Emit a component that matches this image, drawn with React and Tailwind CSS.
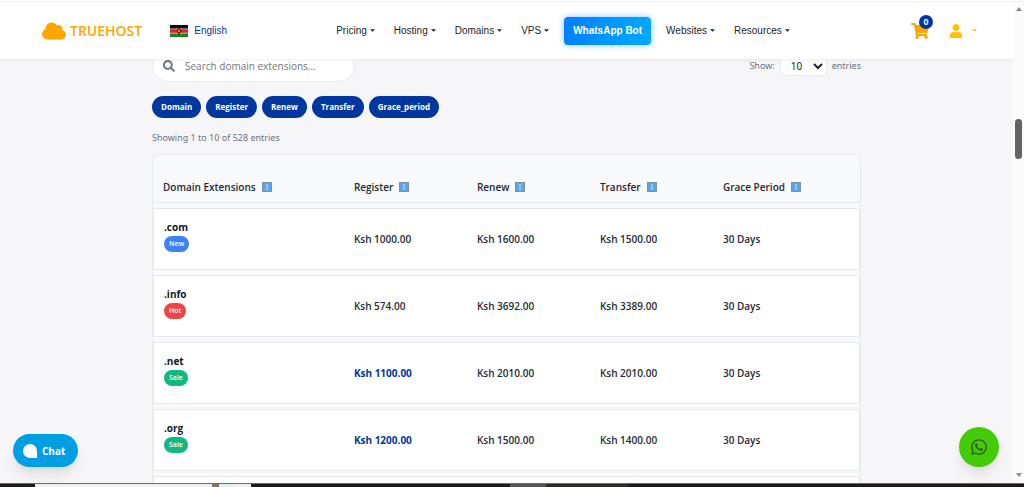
import React, { useState } from "react";
import { FaCloud, FaSearch, FaShoppingCart, FaUser, FaWhatsapp } from "react-icons/fa";

const menuBefore = ["Pricing", "Hosting", "Domains", "VPS"];
const menuAfter = ["Websites", "Resources"];

const filters = ["Domain", "Register", "Renew", "Transfer", "Grace_period"];

const columns = ["Domain Extensions", "Register", "Renew", "Transfer", "Grace Period"];

const domains = [
  { name: ".com", badge: "New", register: "1000.00", renew: "1600.00", transfer: "1500.00" },
  { name: ".info", badge: "Hot", register: "574.00", renew: "3692.00", transfer: "3389.00" },
  { name: ".net", badge: "Sale", register: "1100.00", renew: "2010.00", transfer: "2010.00" },
  { name: ".org", badge: "Sale", register: "1200.00", renew: "1500.00", transfer: "1400.00" }
];

const badgeColors = {
  New: "bg-[#3b82f6]",
  Hot: "bg-[#ef4444]",
  Sale: "bg-[#10b981]"
};

const Caret = () => (
  <svg viewBox="0 0 6 3" className="w-[5px] h-[3px]" fill="currentColor" aria-hidden="true">
    <path d="M0 0h6L3 3z" />
  </svg>
);

const KenyaFlag = () => (
  <svg viewBox="0 0 18 12" className="w-[18px] h-3" role="img" aria-label="Kenya">
    <rect width="18" height="12" fill="#fff" />
    <rect width="18" height="3.6" fill="#0a0a0a" />
    <rect y="4.2" width="18" height="3.6" fill="#e0202e" />
    <rect y="8.4" width="18" height="3.6" fill="#0b8a1a" />
    <path d="M6.6 2.6l4.8 7M11.4 2.6l-4.8 7" stroke="#fff" strokeWidth="0.4" />
    <ellipse cx="9" cy="6" rx="1.7" ry="3.4" fill="#a80d18" />
    <ellipse cx="9" cy="6" rx="0.5" ry="1.2" fill="#fff" />
    <path d="M7.4 4.8v2.4M10.6 4.8v2.4" stroke="#111" strokeWidth="0.6" />
  </svg>
);

const SortIcon = () => (
  <svg viewBox="0 0 10 10" className="w-[10px] h-[10px]" aria-hidden="true">
    <rect x="0.5" y="0.5" width="9" height="9" fill="#58a6e6" stroke="#7b93a8" />
    <path d="M5 2.5v5M4 3.5l1-1 1 1M4 6.5l1 1 1-1" fill="none" stroke="#d3e8fa" strokeWidth="0.8" />
  </svg>
);

const MenuLink = ({ label }) => (
  <a href="#" className="flex items-center gap-[3px]">
    {label}
    <Caret />
  </a>
);

const Header = () => (
  <header className="relative z-10 flex h-[57px] shrink-0 items-center justify-between bg-white pl-[42px] pr-9 shadow-[0_1px_4px_rgba(0,0,0,0.07)] font-['Liberation_Sans',Arial,sans-serif] text-[10px] text-[#212529]">
    <div className="flex items-center gap-7">
      <a href="#" className="flex items-center gap-1 text-[#ffa500]">
        <FaCloud className="h-6 w-6" />
        <span className="font-['Open_Sans',sans-serif] text-[14px] font-semibold">TRUEHOST</span>
      </a>
      <a href="#" className="flex items-center gap-[6px] text-[#00379e]">
        <KenyaFlag />
        English
      </a>
    </div>

    <nav className="flex items-center gap-[19px] pr-3">
      {menuBefore.map((label) => (
        <MenuLink key={label} label={label} />
      ))}
      <a
        href="#"
        className="-mx-1 rounded-sm bg-linear-to-r from-[#0080ff] to-[#00aaff] px-[9px] py-[6px] font-bold leading-4 text-white shadow-[0_0_6px_rgba(0,140,255,0.5)]"
      >
        WhatsApp Bot
      </a>
      {menuAfter.map((label) => (
        <MenuLink key={label} label={label} />
      ))}
    </nav>

    <div className="flex items-center gap-5">
      <button type="button" aria-label="Cart" className="relative text-[#ffa500]">
        <FaShoppingCart className="h-[18px] w-[18px]" />
        <span className="absolute -right-1 -top-[7px] flex h-[14px] w-[14px] items-center justify-center rounded-full bg-[#00379e] text-[9px] font-bold text-white">
          0
        </span>
      </button>
      <button type="button" aria-label="Account" className="flex items-center gap-[9px] text-[#ffc107]">
        <FaUser className="h-[14px] w-[14px]" />
        <Caret />
      </button>
    </div>
  </header>
);

const DomainTable = () => (
  <div className="mt-2 rounded-t-lg border border-[#e9ecef] bg-[#f8f9fb]">
    <table className="w-full table-fixed border-separate border-spacing-x-0 border-spacing-y-[5px] text-left">
      <colgroup>
        <col className="w-[27%]" />
        <col className="w-[17.4%]" />
        <col className="w-[17.4%]" />
        <col className="w-[17.4%]" />
        <col />
      </colgroup>
      <thead>
        <tr>
          {columns.map((column) => (
            <th
              key={column}
              className="h-[43px] border-b border-[#e9ecef] px-[10px] pb-[7px] align-bottom font-semibold text-[#1f2937]"
            >
              <span className="flex items-center gap-[6px]">
                {column}
                <SortIcon />
              </span>
            </th>
          ))}
        </tr>
      </thead>
      <tbody className="font-semibold text-[#1f2937] [&_td]:h-[62px] [&_td]:border-y [&_td]:border-[#e5e7eb] [&_td]:bg-white [&_td]:px-[10px]">
        {domains.map((domain) => (
          <tr key={domain.name}>
            <td className="rounded-l-xs border-l">
              <div className="flex flex-col items-start gap-px pb-2">
                <span className="text-[10px] font-bold leading-4 text-[#111827]">{domain.name}</span>
                <span
                  className={`${badgeColors[domain.badge]} rounded-full px-[5px] text-[7px] font-semibold leading-4 text-white`}
                >
                  {domain.badge}
                </span>
              </div>
            </td>
            <td className={domain.badge === "Sale" ? "font-bold text-[#00379e]" : ""}>
              Ksh {domain.register}
            </td>
            <td>Ksh {domain.renew}</td>
            <td>Ksh {domain.transfer}</td>
            <td className="rounded-r-xs border-r">30 Days</td>
          </tr>
        ))}
        <tr aria-hidden="true">
          <td colSpan={5} className="rounded-xs border-x" />
        </tr>
      </tbody>
    </table>
  </div>
);

const ScrollBar = () => (
  <div className="flex w-[11px] shrink-0 flex-col items-center bg-[#fbfbfb] pb-[6px] pt-[5px] text-[#8a8a8a]">
    <svg viewBox="0 0 6 4" className="h-1 w-[6px]" fill="currentColor" aria-hidden="true">
      <path d="M0 4h6L3 0z" />
    </svg>
    <div className="mt-[108px] h-10 w-[7px] rounded-full bg-[#636363]" />
    <svg viewBox="0 0 6 4" className="mt-auto h-1 w-[6px]" fill="currentColor" aria-hidden="true">
      <path d="M0 0h6L3 4z" />
    </svg>
  </div>
);

// Edge of the desktop taskbar below the window
const TaskBar = () => (
  <div className="flex h-1 shrink-0 border-t border-[#6b6b6b] bg-[#1c1a1a]">
    <div className="ml-[3.4%] flex w-[21.1%] justify-end bg-[#f0f0f0] pr-4">
      <div className="w-[7px] bg-[#8a7266]" />
      <div className="w-4 bg-[#dff1f1]" />
    </div>
    <div className="ml-[25.3%] w-[3.5%] bg-[#555451]" />
    <div className="w-[8%] bg-[#27301c]" />
  </div>
);

const App = () => {
  const [search, setSearch] = useState("");
  const [perPage, setPerPage] = useState("10");

  return (
    <div className="flex h-screen flex-col overflow-hidden bg-white font-['Open_Sans','Noto_Sans',sans-serif] text-[10px] leading-4">
      <div className="h-[2px] shrink-0 border-b border-[#eeeeee]" />
      <div className="flex min-h-0 flex-1">
        <div className="relative flex min-w-0 flex-1 flex-col overflow-hidden bg-[#f6f6f9]">
          <Header />

          <main className="mx-auto -mt-[10px] w-full max-w-[709px]">
            {/* Search and page size */}
            <div className="flex items-start justify-between text-[#6b7280]">
              <label className="flex h-[33px] w-[203px] items-center gap-[10px] rounded-full border border-[#e9ecef] bg-white pl-[10px]">
                <FaSearch className="h-3 w-3 shrink-0 text-[#6c757d]" />
                <input
                  type="text"
                  aria-label="Search domain extensions"
                  placeholder="Search domain extensions..."
                  value={search}
                  onChange={(e) => setSearch(e.target.value)}
                  className="w-full min-w-0 text-[10px] text-gray-700 outline-none placeholder:text-[#757575]"
                />
              </label>
              <label className="flex items-center gap-[5px] pt-[7px] font-['Noto_Sans',sans-serif] text-[9px]">
                Show:
                <select
                  value={perPage}
                  onChange={(e) => setPerPage(e.target.value)}
                  className="h-5 w-[47px] rounded-sm border border-[#e9ecef] bg-white pl-[6px] text-[10px] text-[#212529]"
                >
                  <option>10</option>
                  <option>25</option>
                  <option>50</option>
                </select>
                entries
              </label>
            </div>

            {/* Column filters */}
            <div className="mt-[14px] flex gap-[5px]">
              {filters.map((filter) => (
                <button
                  key={filter}
                  type="button"
                  className="h-[22px] rounded-full bg-[#00379e] px-[9px] text-[8px] font-bold text-white"
                >
                  {filter}
                </button>
              ))}
            </div>

            <p className="mt-3 font-['Noto_Sans',sans-serif] text-[9px] text-[#6b7280]">
              Showing 1 to 10 of 528 entries
            </p>

            <DomainTable />
          </main>

          <button
            type="button"
            className="absolute bottom-4 left-[13px] flex h-[33px] items-center gap-[5px] rounded-full bg-[#009fe3] pl-[10px] pr-[13px] text-[10px] font-bold text-white shadow-lg"
          >
            <span className="h-[14px] w-[14px] rounded-full rounded-br-none bg-white" />
            Chat
          </button>
          <a
            href="#"
            aria-label="WhatsApp"
            className="absolute bottom-4 right-[14px] flex h-10 w-10 items-center justify-center rounded-full bg-[#43cc05] text-[#33503d] shadow-lg"
          >
            <FaWhatsapp className="h-[18px] w-[18px]" />
          </a>
        </div>
        <ScrollBar />
      </div>
      <TaskBar />
    </div>
  );
};

export default App;
